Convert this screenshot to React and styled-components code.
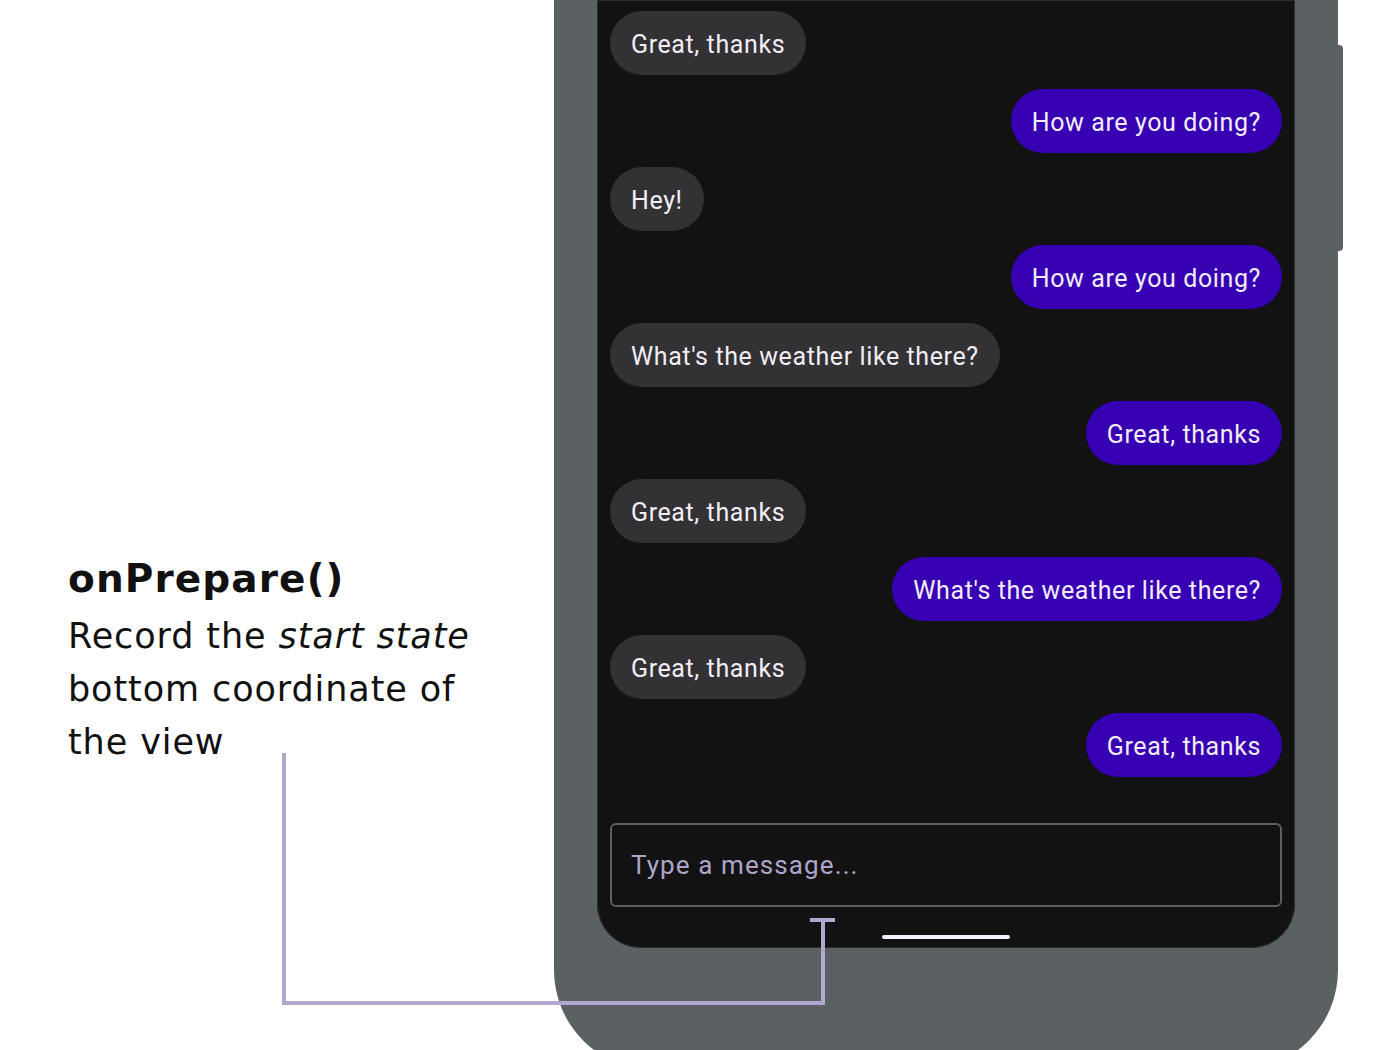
import React from 'react'
import styled, { createGlobalStyle } from 'styled-components'

const GlobalStyle = createGlobalStyle`
  html, body {
    margin: 0;
    padding: 0;
    background: #ffffff;
    overflow: hidden;
  }
  #root {
    width: 1400px;
    height: 1050px;
  }
`

const messages = [
  { text: 'Great, thanks', mine: false },
  { text: 'How are you doing?', mine: true },
  { text: 'Hey!', mine: false },
  { text: 'How are you doing?', mine: true },
  { text: "What's the weather like there?", mine: false },
  { text: 'Great, thanks', mine: true },
  { text: 'Great, thanks', mine: false },
  { text: "What's the weather like there?", mine: true },
  { text: 'Great, thanks', mine: false },
  { text: 'Great, thanks', mine: true },
]

const App = () => {
  return (
    <>
      <GlobalStyle />
      <Page>
        <Caption>
          <Title>onPrepare()</Title>
          <Description>
            Record the <em>start state</em>
            <br />
            bottom coordinate of
            <br />
            the view
          </Description>
        </Caption>

        <PhoneArea>
          <Phone>
            <Screen>
              <ChatList>
                {messages.map((m, i) => (
                  <Bubble key={i} mine={m.mine}>
                    {m.text}
                  </Bubble>
                ))}
              </ChatList>
              <InputBox>Type a message...</InputBox>
              <HomeBar />
            </Screen>
          </Phone>
          <SideButton />
        </PhoneArea>

        {/* bracket pointing at the bottom edge of the input */}
        <Connector width="1400" height="1050" viewBox="0 0 1400 1050">
          <polyline
            points="284,753 284,1003 823,1003 823,920"
            fill="none"
            stroke="#b3a7d0"
            strokeWidth="4"
          />
          <line x1="810" y1="920" x2="835" y2="920" stroke="#b3a7d0" strokeWidth="4" />
        </Connector>
      </Page>
    </>
  )
}

export default App

const Page = styled.div`
  position: relative;
  width: 1400px;
  height: 1050px;
  display: flex;
  overflow: hidden;
  background: #ffffff;
`

const Caption = styled.div`
  width: 486px;
  padding: 555px 0 0 68px;
  color: #111111;
  font-family: 'DejaVu Sans', 'Open Sans', sans-serif;
`

const Title = styled.div`
  font-size: 39px;
  font-weight: 700;
  line-height: 48px;
  letter-spacing: 1.1px;
`

const Description = styled.div`
  margin-top: 7px;
  font-size: 35px;
  line-height: 53px;
  font-weight: 400;
  letter-spacing: 0.9px;

  em {
    font-style: italic;
  }
`

const PhoneArea = styled.div`
  display: flex;
  align-items: flex-start;
`

const Phone = styled.div`
  width: 784px;
  height: 1070px;
  box-sizing: border-box;
  padding: 0 43px 122px;
  background: #5b6063;
  border-radius: 0 0 100px 100px;
  display: flex;
`

const SideButton = styled.div`
  width: 5px;
  height: 206px;
  margin-top: 45px;
  background: #5b6063;
  border-radius: 0 4px 4px 0;
`

const Screen = styled.div`
  flex: 1;
  background: #121212;
  border-radius: 0 0 44px 44px;
  box-shadow: inset 0 0 0 1px #2c2f31;
  padding: 11px 13px 0;
  display: flex;
  flex-direction: column;
  font-family: Roboto, 'Noto Sans', sans-serif;
`

const ChatList = styled.div`
  display: flex;
  flex-direction: column;
  gap: 14px;
`

const Bubble = styled.div`
  align-self: ${(p) => (p.mine ? 'flex-end' : 'flex-start')};
  height: 64px;
  box-sizing: border-box;
  padding: 2px 21px 0;
  display: flex;
  align-items: center;
  border-radius: 32px;
  background: ${(p) => (p.mine ? '#3700b3' : '#323234')};
  color: #f3edf7;
  font-size: 25px;
  letter-spacing: 0.6px;
  white-space: nowrap;
`

const InputBox = styled.div`
  margin-top: 46px;
  height: 84px;
  box-sizing: border-box;
  border: 2px solid #5c5f63;
  border-radius: 6px;
  padding: 0 19px;
  display: flex;
  align-items: center;
  color: #b0a4c8;
  font-size: 26px;
  letter-spacing: 1.1px;
`

const HomeBar = styled.div`
  align-self: center;
  width: 128px;
  height: 4px;
  margin-top: 28px;
  border-radius: 2px;
  background: #f4eefa;
`

const Connector = styled.svg`
  position: absolute;
  left: 0;
  top: 0;
  pointer-events: none;
`
